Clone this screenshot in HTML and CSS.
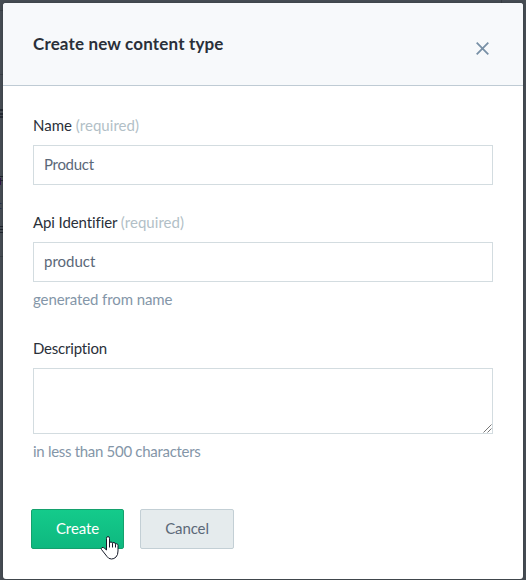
FILE: index.html
```html
<!DOCTYPE html>
<html lang="en">
<head>
<meta charset="utf-8">
<title>Create new content type</title>
<link rel="stylesheet" href="styles.css">
</head>
<body>
<svg class="backdrop" width="526" height="580" aria-hidden="true">
  <path d="M0 10.5h3M0 74.5h3M0 256.5h3" stroke="#3a4047"/>
  <path d="M0 110h3M0 114h3M0 117h3" stroke="#1d222b" stroke-width="1.5"/>
  <path d="M.5 178v7" stroke="#31164a"/>
  <path d="M0 176.500h3M0 180.500h3M0 226.500h3M0 229.500h3M0 232.500h3" stroke="#20252e"/>
  <path d="M0 203.500h1.500M0 208.500h1.500" stroke="#25304a"/>
  <path d="M501.500 0v3" stroke="#393f45"/>
</svg>
<form class="modal">
  <header class="modal-header">
    <h1 class="title">Create new content type</h1>
    <svg class="close" width="13" height="13" viewBox="0 0 13 13"><path d="M.7 .7l11.600 11.600M12.300 .7L.7 12.300" stroke="#7890a6" stroke-width="1.8" fill="none"/></svg>
  </header>
  <main class="modal-body">
    <div class="field name">
      <label class="label" for="name">Name <span class="required">(required)</span></label>
      <input class="input value-name" id="name" value="Product">
    </div>
    <div class="field api">
      <label class="label label-api" for="api">Api Identifier <span class="required">(required)</span></label>
      <input class="input" id="api" value="product">
      <p class="hint">generated from name</p>
    </div>
    <div class="field desc">
      <label class="label label-desc" for="desc">Description</label>
      <div class="area-wrap">
        <textarea class="input area" id="desc"></textarea>
        <svg class="grip" width="9" height="9" viewBox="0 0 9 9"><path d="M.5 8.500L8.500 .5M4.500 8.500L8.500 4.500" stroke="#666" stroke-width=".9"/></svg>
      </div>
      <p class="hint hint-desc">in less than 500 characters</p>
    </div>
  </main>
  <footer class="actions">
    <button class="button primary" type="button">Create
      <svg class="cursor" width="20" height="25" viewBox="0 0 20 25"><path d="M6.500 15V3.500Q6.500 1.500 8 1.500T9.500 3.500V8Q9.500 7 11 7T12.500 8.500Q12.500 7.500 14 7.500T15.500 9.500Q15.500 8.500 16.800 8.800T18 10.500V16Q18 20 16 22Q14 24 11.500 24Q8.500 24 7 21.500L1.500 14.500Q.8 13 2 12.500T4.500 13.300Z" fill="#fff" stroke="#151a28"/><path d="M9.500 7.500v5M12.500 8.500v4M15.500 9.500v3" stroke="#151a28"/></svg>
    </button>
    <button class="button cancel" type="button">Cancel</button>
  </footer>
</form>
</body>
</html>
```

FILE: styles.css
```css
* { box-sizing: border-box; }
body {
  margin: 0;
  width: 526px;
  height: 580px;
  padding: 3px;
  overflow: hidden;
  position: relative;
  background: #474d54;
  font: 15px/20px Lato, sans-serif;
}
.backdrop { position: absolute; top: 0; left: 0; }
.modal {
  position: relative;
  width: 520px;
  height: 576px;
  background: #fff;
  border-radius: 3px;
  box-shadow: 0 0 3px rgba(20, 25, 32, .35);
}
.modal-header {
  height: 83px;
  padding: 0 34px 0 30px;
  display: flex;
  align-items: center;
  justify-content: space-between;
  background: #f7f9fb;
  border-bottom: 1px solid #bfcbd4;
  border-radius: 3px 3px 0 0;
}
.title { margin: 0; font-size: 17px; line-height: 20px; font-weight: 700; letter-spacing: .16px; color: #2a3039; }
.close { margin-top: 8px; }
.modal-body { padding: 29px 30px 0; }
.field { display: flex; flex-direction: column; }
.name { height: 97px; }
.api { height: 126px; }
.desc { height: 171px; }
.label { height: 30px; color: #2a3039; white-space: nowrap; }
.label-api { letter-spacing: -.1px; }
.label-desc { letter-spacing: -.2px; }
.required { color: #b2bfc7; letter-spacing: .05px; }
.input {
  display: block;
  width: 460px;
  height: 40px;
  margin: 0;
  padding: 0 10px 3px;
  border: 1px solid #d3dce0;
  border-radius: 0;
  outline: 0;
  background: #fff;
  color: #5b6878;
  font: 15px/20px Lato, sans-serif;
}
.value-name { letter-spacing: -.3px; }
.hint { margin: 7px 0 0; color: #8496a8; letter-spacing: -.1px; }
.hint-desc { letter-spacing: -.3px; }
.area-wrap { position: relative; height: 66px; }
.area { height: 66px; resize: none; }
.grip { position: absolute; right: 1px; bottom: 1px; }
.actions { display: flex; gap: 16px; margin: 0 28px; }
.button {
  position: relative;
  height: 40px;
  padding: 0 0 3px;
  border-radius: 2px;
  font: 15px/20px Lato, sans-serif;
  letter-spacing: -.1px;
}
.primary { width: 93px; color: #fff; border: 1px solid #14a16d; background: linear-gradient(#14cb8b, #0eb87f); }
.cancel { width: 94px; color: #5b6878; border: 1px solid #c3cfd5; background: #e5ebed; }
.cursor { position: absolute; left: 68px; top: 25px; }
```
